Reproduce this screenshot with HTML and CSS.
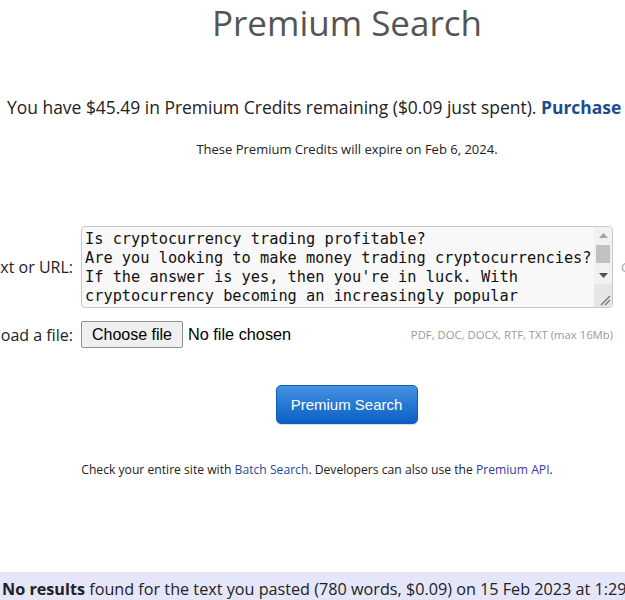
FILE: index.html
```html
<!DOCTYPE html>
<html>
<head>
<meta charset="utf-8">
<link rel="stylesheet" href="styles.css">
</head>
<body>
<div class="page">
  <div class="head">
    <h1 class="title">Premium Search</h1>
    <p class="credits">You have $45.49 in Premium Credits remaining ($0.09 just spent). <a class="buy" href="#">Purchase</a></p>
    <p class="expire">These Premium Credits will expire on Feb 6, 2024.</p>
  </div>

  <form class="form">
    <div class="row row-text">
      <label class="label">Enter text or URL:</label>
      <div class="ta-wrap">
        <textarea class="input-text" rows="4">Is cryptocurrency trading profitable?
Are you looking to make money trading cryptocurrencies?
If the answer is yes, then you're in luck. With
cryptocurrency becoming an increasingly popular
investment option, more and more people are turning
to trading as a way to earn extra income. But is it
really profitable? In this article, we will take a look
at the pros and cons of cryptocurrency trading and
help you decide whether it is the right choice for you.
What is cryptocurrency trading?
Cryptocurrency trading is the act of buying and selling
digital currencies on an exchange with the goal of
making a profit. Traders speculate on price movements,
buying when they believe the price will rise and
selling when they think it will fall.
The benefits of trading
One of the biggest advantages of cryptocurrency trading
is that markets are open around the clock, seven days
a week. This means you can trade whenever it suits you.
Another benefit is volatility. Prices of digital assets
can move dramatically in a short space of time, which
creates plenty of opportunities for traders.
The risks of trading
Of course, volatility cuts both ways. The same price
swings that create opportunities can also lead to
large losses, especially for beginners.
Conclusion
So, is cryptocurrency trading profitable? It can be,
but it is not guaranteed. Do your research, start small
and never invest more than you can afford to lose.</textarea>
        <div class="sbar" aria-hidden="true">
          <span class="sb-arrow">
            <svg width="9" height="5" viewBox="0 0 9 5"><polygon points="0,5 4.5,0 9,5" fill="#a3a3a3"/></svg>
          </span>
          <span class="sb-track"><span class="sb-thumb"></span></span>
          <span class="sb-arrow">
            <svg width="9" height="5" viewBox="0 0 9 5"><polygon points="0,0 9,0 4.5,5" fill="#505050"/></svg>
          </span>
          <span class="sb-corner">
            <svg width="17" height="17" viewBox="0 0 17 17"><path d="M6 15 L15 6 M10 15 L15 10" stroke="#6e6e6e" stroke-width="1.2" fill="none"/></svg>
          </span>
        </div>
      </div>
      <span class="aside">Clear</span>
    </div>
    <div class="row row-file">
      <label class="label">Upload a file:</label>
      <div class="file-field">
        <span class="file">
          <button class="file-btn" type="button">Choose file</button>
          <span class="file-name">No file chosen</span>
        </span>
        <span class="hint">PDF, DOC, DOCX, RTF, TXT (max 16Mb)</span>
      </div>
    </div>
    <div class="actions">
      <button class="submit" type="button">Premium Search</button>
    </div>
    <p class="more">Check your entire site with <a class="lnk" href="#">Batch Search</a>. Developers can also use the <a class="lnk lnk2" href="#">Premium API</a>.</p>
  </form>

  <div class="result">
    <p class="result-text"><b>No results</b> found for the text you pasted (780 words, $0.09) on 15 Feb 2023 at 1:29</p>
  </div>
</div>
</body>
</html>
```

FILE: styles.css
```css
html, body {
  margin: 0;
  padding: 0;
  overflow: hidden;
  background: #fff;
}
body {
  font-family: "Open Sans", sans-serif;
  color: #222;
  width: 625px;
  height: 600px;
}
.page {
  width: 625px;
  position: relative;
  height: 600px;
}
.head {
  padding-left: 69px;
  text-align: center;
}
.title {
  margin: 0;
  padding-top: 2px;
  font-weight: 400;
  font-size: 35px;
  line-height: 42px;
  color: #555;
}
.credits {
  margin: 51px 0 0 -62px;
  text-align: left;
  font-size: 17.45px;
  line-height: 24px;
  white-space: nowrap;
}
.buy {
  color: #1a4e8f;
  font-weight: 700;
  text-decoration: none;
}
.expire {
  margin: 22px 0 0;
  font-size: 13px;
  line-height: 16px;
}
.form {
  margin-top: 69px;
}
.row {
  display: flex;
  align-items: center;
  gap: 8px;
  margin-left: -87px;
}
.label {
  width: 160px;
  flex: none;
  text-align: right;
  font-size: 16px;
  color: #222;
}
.ta-wrap {
  position: relative;
  width: 532px;
  height: 82px;
  flex: none;
}
.input-text {
  display: block;
  width: 532px;
  height: 82px;
  box-sizing: border-box;
  margin: 0;
  padding: 3px 20px 1px 3px;
  border: 1px solid #c8c8c8;
  border-radius: 4px;
  background: #f8f8f8;
  font-family: "DejaVu Sans Mono", monospace;
  font-size: 15.3px;
  line-height: 19px;
  color: #111;
  resize: none;
  overflow: hidden;
}
.sbar {
  position: absolute;
  top: 1px;
  right: 1px;
  bottom: 1px;
  width: 18px;
  display: flex;
  flex-direction: column;
  background: #f1f1f1;
  border-radius: 0 3px 3px 0;
  overflow: hidden;
}
.sb-arrow {
  height: 17px;
  flex: none;
  display: flex;
  align-items: center;
  justify-content: center;
}
.sb-track {
  flex: 1;
  display: flex;
  flex-direction: column;
  padding: 1px 2px 0;
}
.sb-thumb {
  height: 18px;
  background: #c1c1c1;
}
.sb-corner {
  height: 23px;
  flex: none;
  background: #e6e6e6;
  display: flex;
  align-items: flex-end;
  justify-content: flex-end;
}
.aside {
  font-size: 13px;
  color: #9ab;
}
.row-file {
  margin-top: 13px;
}
.file-field {
  width: 532px;
  display: flex;
  justify-content: space-between;
  align-items: center;
}
.file {
  display: flex;
  align-items: center;
  gap: 5px;
  font-family: "Liberation Sans", Arial, sans-serif;
  font-size: 16px;
  color: #000;
}
.file-btn {
  font-family: "Liberation Sans", Arial, sans-serif;
  font-size: 16px;
  height: 27px;
  width: 102px;
  padding: 0;
  background: #efefef;
  border: 1px solid #8f8f8f;
  border-radius: 2px;
  color: #000;
}
.file-name {
  font-size: 16.3px;
}
.hint {
  font-size: 11.3px;
  color: #999;
}
.actions {
  display: flex;
  justify-content: center;
  margin-top: 37px;
  padding-left: 68px;
}
.submit {
  width: 142px;
  height: 39px;
  border: 1px solid #0d5cb6;
  border-radius: 5px;
  background: linear-gradient(#4592e2, #0b5fc4);
  color: #fff;
  font-family: "Liberation Sans", Arial, sans-serif;
  font-size: 15px;
  box-shadow: 0 1px 1px rgba(0,0,0,0.15);
}
.more {
  margin: 38px 0 0;
  text-align: center;
  width: 634px;
  font-size: 12.15px;
  line-height: 16px;
}
.lnk {
  color: #1e4c9c;
  text-decoration: none;
}
.lnk2 {
  color: #3b3a9e;
}
.result {
  position: absolute;
  left: 0;
  top: 572px;
  width: 625px;
  height: 40px;
  background: #e6e6fa;
}
.result-text {
  margin: 0;
  padding: 6px 0 0 2px;
  font-size: 16.2px;
  line-height: 22px;
  white-space: nowrap;
}
```
